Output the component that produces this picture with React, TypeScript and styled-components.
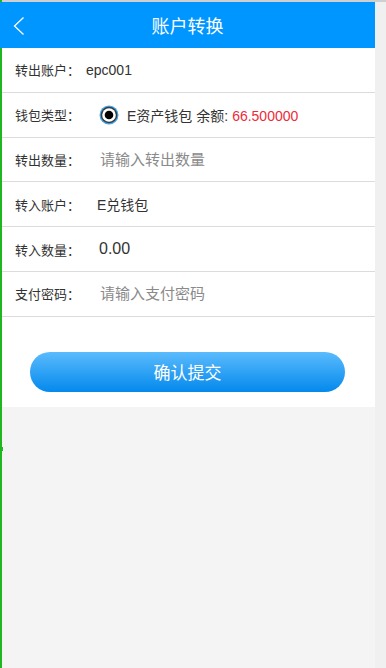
import styled, { createGlobalStyle } from "styled-components";

const GlobalStyle = createGlobalStyle`
  html, body {
    margin: 0;
    padding: 0;
    background: #f0f0f0;
  }
  body {
    border-top: 2px solid #cfcfcf;
    font-family: "Liberation Sans", "Noto Sans CJK SC", sans-serif;
  }
`;

const Page = styled.div`
  width: 375px;
  min-height: 666px;
  background: #f4f4f4;
`;

const EdgeLine = styled.div`
  position: fixed;
  left: 0;
  top: 0;
  bottom: 0;
  width: 2px;
  background: #1fb71f;

  &::after {
    content: "";
    position: absolute;
    left: 0;
    top: 447px;
    width: 3px;
    height: 4px;
    background: #1fb71f;
  }
`;

const Header = styled.header`
  height: 46px;
  background: #0096ff;
  display: flex;
  align-items: center;
  justify-content: center;
  position: relative;
`;

const BackButton = styled.button`
  position: absolute;
  left: 13px;
  top: 14px;
  width: 12px;
  height: 20px;
  padding: 0;
  border: none;
  background: none;
  display: flex;
  align-items: center;
  justify-content: center;
`;

const Title = styled.h1`
  margin: 0;
  color: #fff;
  font-size: 18px;
  font-weight: normal;
`;

const Form = styled.div`
  background: #fff;
`;

const Row = styled.div`
  box-sizing: border-box;
  height: 44.8px;
  border-bottom: 1px solid #dcdcdc;
  display: flex;
  align-items: center;
  padding-left: 15px;
  font-size: 13px;
  color: #333;
`;

const Label = styled.span<{ $wide?: boolean }>`
  width: ${(p) => (p.$wide ? "auto" : "82px")};
  flex-shrink: 0;
  color: #333;
`;

const Value = styled.span<{ $size?: number; $offset?: number }>`
  font-size: ${(p) => p.$size ?? 14}px;
  color: #333;
  margin-left: ${(p) => p.$offset ?? 0}px;
`;

const Input = styled.input`
  border: none;
  outline: none;
  padding: 0;
  margin-left: 3px;
  font-size: 15px;
  font-family: inherit;
  color: #333;
  background: transparent;
  width: 200px;

  &::placeholder {
    color: #8a8a8a;
  }
`;

const RadioWrap = styled.label`
  display: flex;
  align-items: center;
  gap: 8px;
  margin-left: 2px;
  font-size: 14px;
`;

const Balance = styled.span`
  color: #ee2a3a;
  margin-left: 4px;
`;

const ButtonArea = styled.div`
  background: #fff;
  padding: 35px 30px 15px;
`;

const SubmitButton = styled.button`
  width: 100%;
  height: 40px;
  border: none;
  border-radius: 20px;
  background: linear-gradient(to bottom, #5bbbfd, #0389ec);
  color: #fff;
  font-size: 17px;
  font-family: inherit;
`;

const Radio = () => (
  <svg width="20" height="20" viewBox="0 0 20 20">
    <circle cx="10" cy="10" r="9.5" fill="#3fa6e8" />
    <circle cx="10" cy="10" r="8.3" fill="#3a3a3a" />
    <circle cx="10" cy="10" r="6.8" fill="#fff" />
    <circle cx="10" cy="10" r="4.3" fill="#000" />
  </svg>
);

export default function App() {
  return (
    <>
      <GlobalStyle />
      <EdgeLine />
      <Page>
        <Header>
          <BackButton aria-label="返回">
            <svg width="12" height="20" viewBox="0 0 12 20">
              <path d="M10.5 1.5 L1.5 10 L10.5 18.5" fill="none" stroke="#fff" strokeWidth="1.3" />
            </svg>
          </BackButton>
          <Title>账户转换</Title>
        </Header>
        <Form>
          <Row>
            <Label $wide>转出账户：</Label>
            <Value $offset={6}>epc001</Value>
          </Row>
          <Row>
            <Label>钱包类型：</Label>
            <RadioWrap>
              <Radio />
              <span>
                E资产钱包 余额:<Balance>66.500000</Balance>
              </span>
            </RadioWrap>
          </Row>
          <Row>
            <Label>转出数量：</Label>
            <Input placeholder="请输入转出数量" />
          </Row>
          <Row>
            <Label>转入账户：</Label>
            <Value>E兑钱包</Value>
          </Row>
          <Row>
            <Label>转入数量：</Label>
            <Value $size={16} $offset={2}>0.00</Value>
          </Row>
          <Row>
            <Label>支付密码：</Label>
            <Input type="password" placeholder="请输入支付密码" />
          </Row>
        </Form>
        <ButtonArea>
          <SubmitButton>确认提交</SubmitButton>
        </ButtonArea>
      </Page>
    </>
  );
}
